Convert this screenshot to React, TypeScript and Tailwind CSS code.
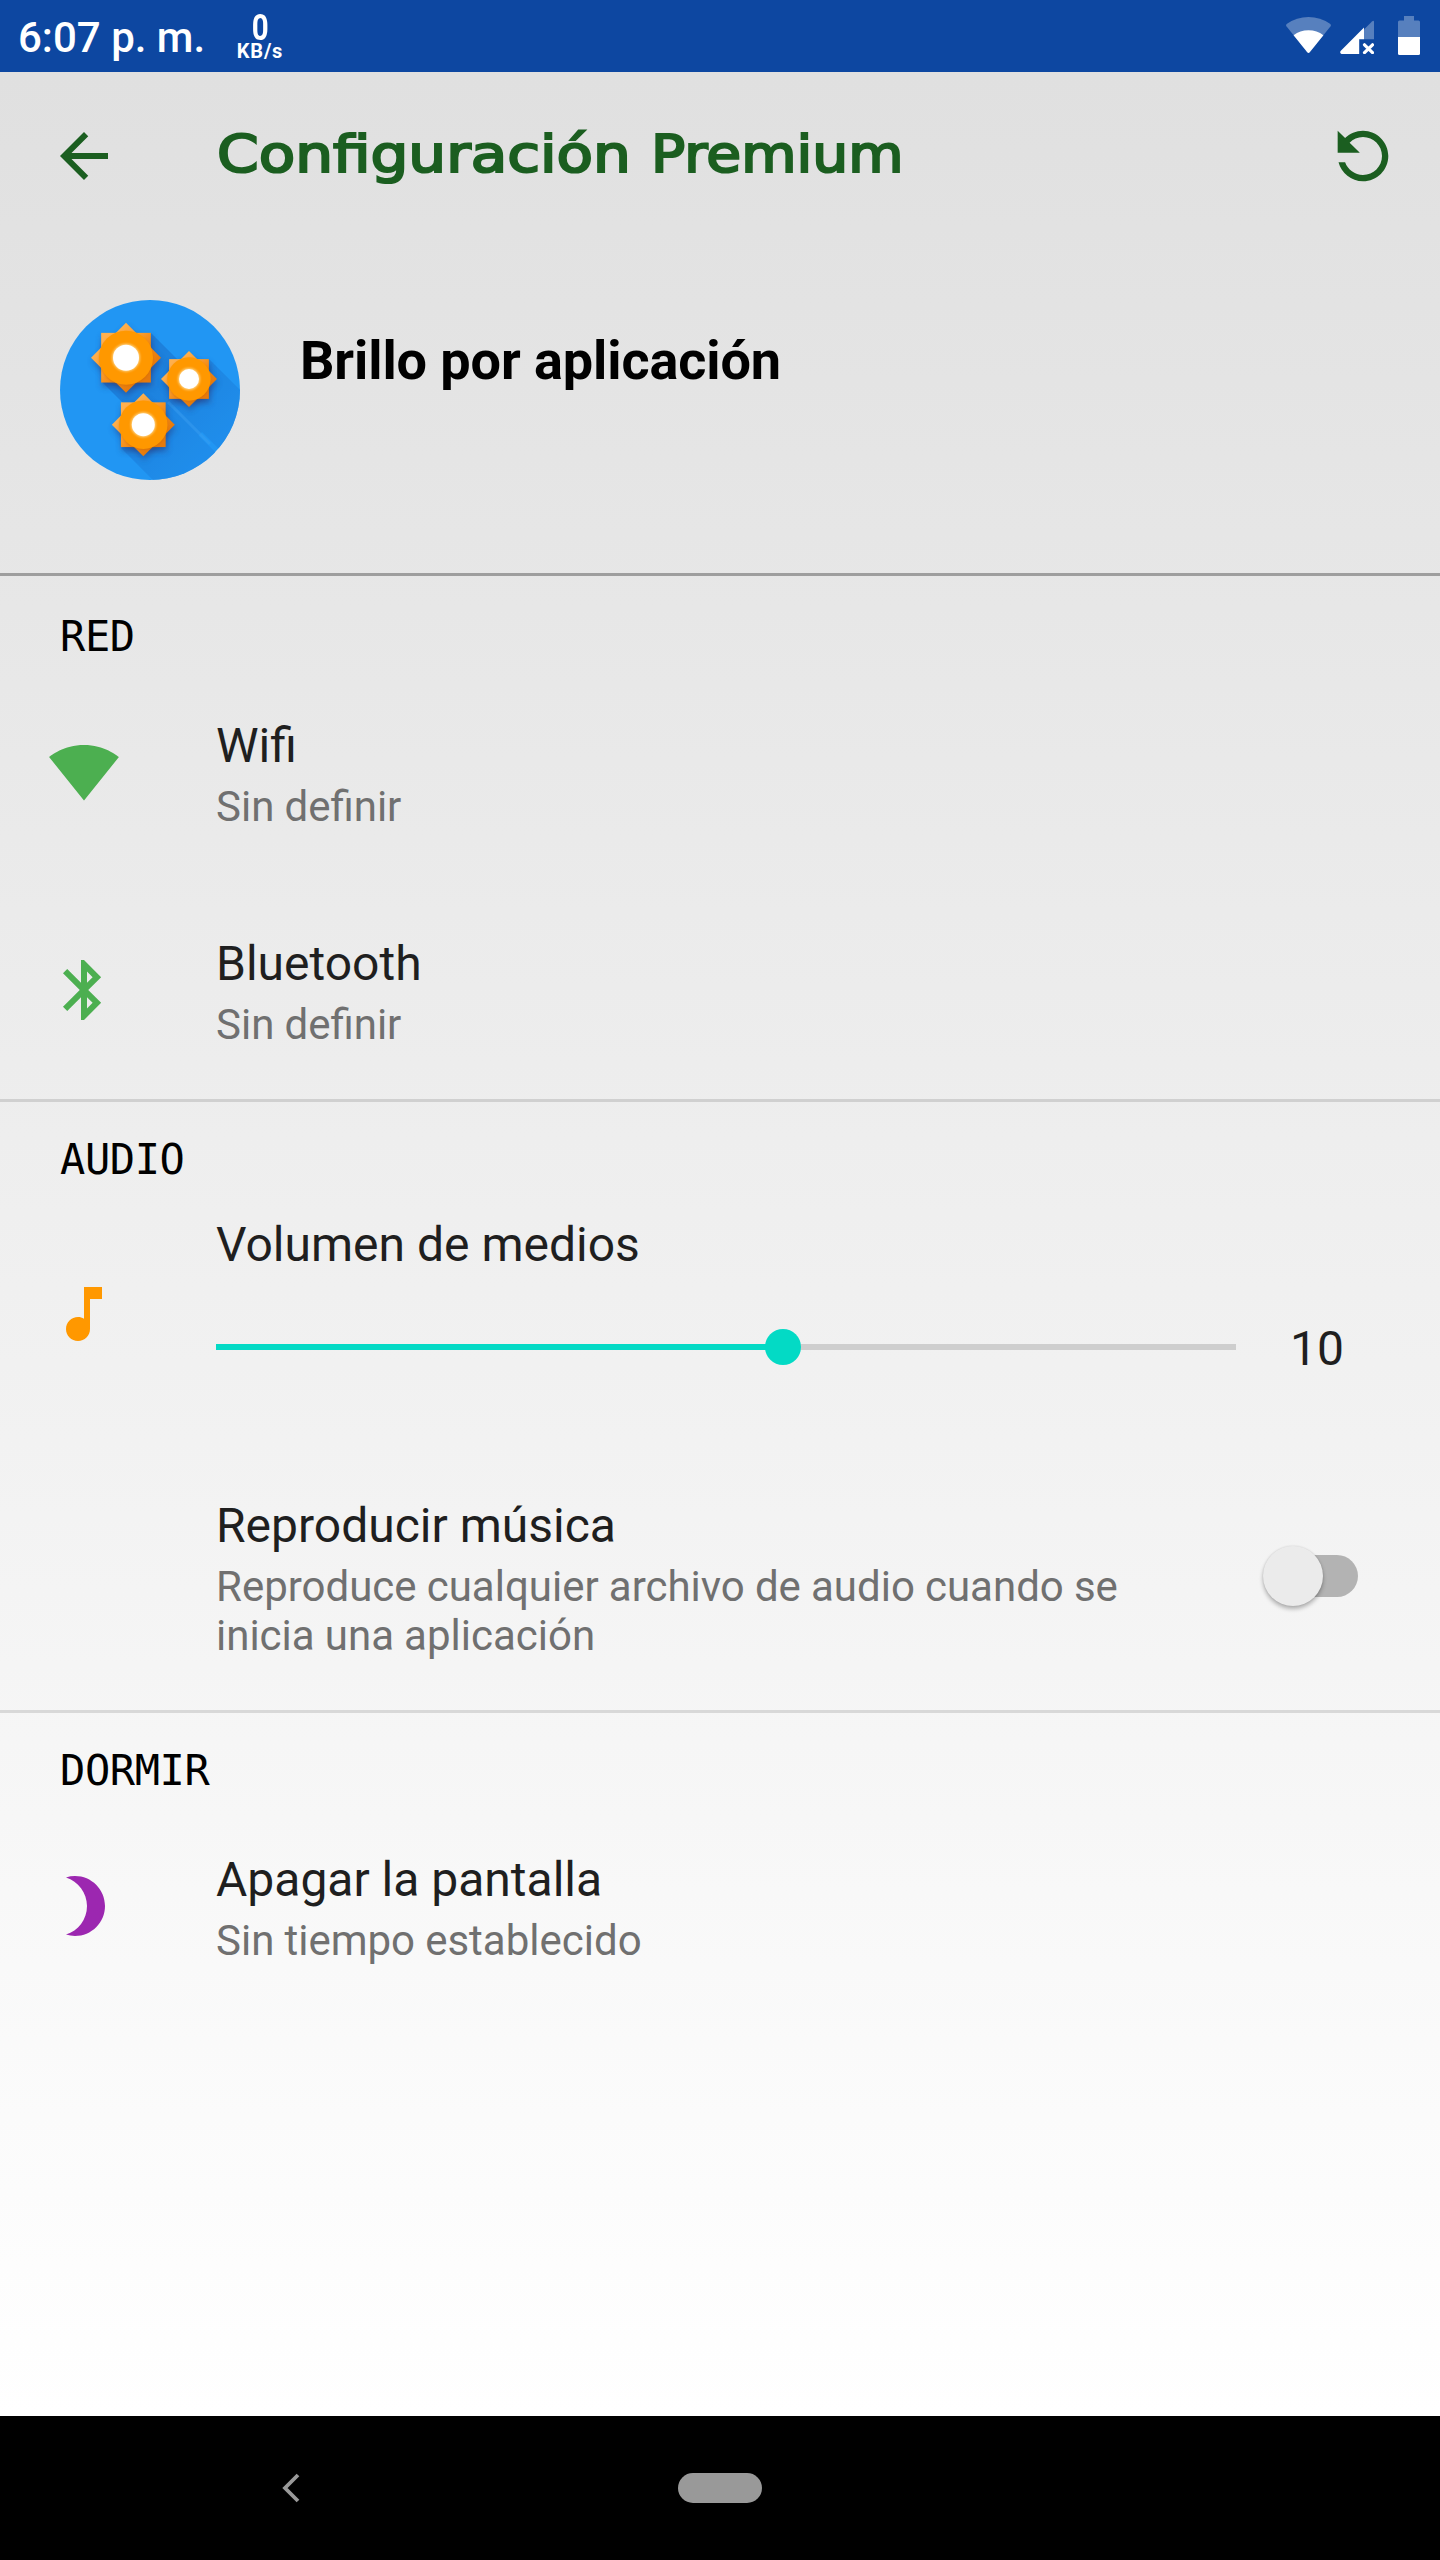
import type { ReactNode } from "react";

const ICONS = {
  back: "M20 11H7.83l5.59-5.59L12 4l-8 8 8 8 1.41-1.41L7.83 13H20v-2z",
  refresh:
    "M17.65 6.35C16.2 4.9 14.21 4 12 4c-4.42 0-7.99 3.58-7.99 8s3.57 8 7.99 8c3.73 0 6.84-2.55 7.73-6h-2.08c-.82 2.33-3.04 4-5.65 4-3.31 0-6-2.69-6-6s2.69-6 6-6c1.66 0 3.14.69 4.22 1.78L13 11h7V4l-2.35 2.35z",
  wifi: "M12.01 21.49L23.64 7c-.45-.34-4.93-4-11.64-4C5.28 3 .81 6.66.36 7l11.63 14.49.01.01.01-.01z",
  bluetooth:
    "M17.71 7.71L12 2h-1v7.59L6.41 5 5 6.41 10.59 12 5 17.59 6.41 19 11 14.41V22h1l5.71-5.71-4.3-4.29 4.3-4.29zM13 5.83l1.88 1.88L13 9.59V5.83zm1.88 10.46L13 18.17v-3.76l1.88 1.88z",
  note: "M12 3v10.55c-.59-.34-1.27-.55-2-.55-2.21 0-4 1.79-4 4s1.79 4 4 4 4-1.79 4-4V7h4V3h-6z",
  moon: "M9 2c-1.05 0-2.05.16-3 .46 4.06 1.27 7 5.06 7 9.54 0 4.48-2.94 8.27-7 9.54.95.3 1.95.46 3 .46 5.52 0 10-4.48 10-10S14.52 2 9 2z",
};

function Icon({ d, className }: { d: string; className: string }) {
  return (
    <svg viewBox="0 0 24 24" fill="currentColor" className={`shrink-0 ${className}`}>
      <path d={d} />
    </svg>
  );
}

function StatusBar() {
  return (
    <div className="flex h-[72px] items-start bg-[#0d47a1] text-white">
      <div className="ml-[18px] mt-[13px] w-[219px] whitespace-nowrap text-[42px] font-medium leading-[49px]">
        6:07 p. m.
      </div>
      <div className="mt-[14px] flex w-[46px] flex-col items-center font-bold">
        <span className="origin-center scale-x-[0.82] text-[36px] leading-[28px]">0</span>
        <span className="text-[20px] leading-[18px] tracking-[0.8px]">KB/s</span>
      </div>
      <div className="ml-auto mr-[20px] mt-[16px] flex items-start">
        <svg viewBox="0 0 45 37" className="mt-px h-[37px] w-[45px]" fill="#fff">
          <path d="M21.3 35.3.6 9.6Q-.6 8 1 6.8 10.600 0 22.500 0T44 6.800Q45.600 8 44.400 9.600L23.700 35.300Q22.500 36.600 21.300 35.300z" opacity=".31" />
          <path d="M21.300 35.300 7.600 18.300Q14 13.300 22.500 13.300T37.400 18.300L23.700 35.300Q22.500 36.600 21.300 35.300z" />
        </svg>
        <svg viewBox="0 0 34 34" className="ml-[9px] mt-[4px] h-[34px] w-[34px]" fill="#fff">
          <path d="M24 9.600 32 1.500Q34 0 34 2V19.200H24z" opacity=".31" />
          <path d="M.6 31 24 7.600V19.200H19.200V34H1.500Q-.6 33 .6 31z" />
          <path d="m24.500 24.800 8 7.800m0-7.800-8 7.800" stroke="#fff" strokeWidth="3.200" strokeLinecap="round" />
        </svg>
        <svg viewBox="0 0 22 39" className="ml-[24px] h-[39px] w-[22px]" fill="#fff">
          <path d="M6 0h10v4.500h4.500Q22 4.500 22 6v15H0V6q0-1.500 1.500-1.500H6z" opacity=".31" />
          <path d="M0 21h22v16.500q0 1.500-1.500 1.500h-19Q0 39 0 37.500z" />
        </svg>
      </div>
    </div>
  );
}

const SUNS = [
  { x: 66, y: 57.7, spike: 35, disc: 27, hole: 13 },
  { x: 129, y: 79, spike: 28, disc: 21.7, hole: 10 },
  { x: 83.3, y: 124.7, spike: 31.5, disc: 24.2, hole: 11.5 },
];

function AppLogo() {
  return (
    <svg viewBox="0 0 180 180" className="h-[180px] w-[180px] shrink-0">
      <defs>
        <clipPath id="disc">
          <circle cx="90" cy="90" r="90" />
        </clipPath>
        <linearGradient id="spikes" x1="0" y1="0" x2="1" y2="1">
          <stop offset="0.25" stopColor="#ffb04e" />
          <stop offset="0.5" stopColor="#f6921e" />
          <stop offset="0.75" stopColor="#e67a0c" />
        </linearGradient>
        <linearGradient id="cast" gradientUnits="userSpaceOnUse" x1="60" y1="60" x2="150" y2="150">
          <stop offset="0" stopColor="#1c75d0" />
          <stop offset="1" stopColor="#1f8ae8" />
        </linearGradient>
        <filter id="soft" x="-30%" y="-30%" width="160%" height="160%">
          <feGaussianBlur stdDeviation="3" />
        </filter>
        <filter id="glow" x="-30%" y="-30%" width="160%" height="160%">
          <feGaussianBlur stdDeviation="1" />
        </filter>
      </defs>
      <circle cx="90" cy="90" r="90" fill="#2196f3" />
      <g clipPath="url(#disc)">
        <g fill="url(#cast)" opacity=".75">
          <path d="M91 33 42 82l75 75 49-49z" />
          <path d="M149 59l-40 40 100 100 40-40z" />
          <path d="M106 103l-45 45 100 100 60-30z" />
        </g>
        <path d="m108 102 42 42" stroke="#3b9df0" strokeWidth="3" opacity=".5" />
      </g>
      {SUNS.map(({ x, y, spike, disc, hole }) => {
        const side = spike * 0.71;
        return (
          <g key={x} transform={`translate(${x} ${y})`}>
            <rect x={-side} y={-side} width={side * 2} height={side * 2} transform="translate(1 4)" fill="#273a80" opacity=".6" filter="url(#soft)" />
            <path d={`M0 ${-spike}L${spike} 0 0 ${spike} ${-spike} 0z`} transform="translate(1 4)" fill="#273a80" opacity=".45" filter="url(#soft)" />
            <rect x={-side} y={-side} width={side * 2} height={side * 2} fill="url(#spikes)" />
            <path d={`M0 ${-spike}L${spike} 0 0 ${spike} ${-spike} 0z`} fill="url(#spikes)" />
            <circle cy="1" r={disc} fill="#b85c00" opacity=".35" filter="url(#glow)" />
            <circle r={disc} fill="#ff9800" />
            <circle r={hole + 1} fill="#ffd180" filter="url(#glow)" />
            <circle r={hole} fill="#fff" />
          </g>
        );
      })}
    </svg>
  );
}

function Heading({ children }: { children: ReactNode }) {
  return (
    <h2 className="pl-[60px] font-['DejaVu_Sans_Mono',monospace] text-[42px] leading-[49px] tracking-[-0.4px] text-black">
      {children}
    </h2>
  );
}

function Labels({ title, summary }: { title: string; summary: string }) {
  return (
    <div className="w-[960px]">
      <div className="text-[48px] leading-[56px] text-[#1f1f1f]">{title}</div>
      <div className="mt-[8px] text-[42px] leading-[49px] text-[#707070] [word-spacing:-0.3px]">{summary}</div>
    </div>
  );
}

function Row({ icon, title, summary }: { icon: ReactNode; title: string; summary: string }) {
  return (
    <div className="flex h-[218px] items-center pl-[48px]">
      <div className="mb-[4px] w-[168px] shrink-0">{icon}</div>
      <Labels title={title} summary={summary} />
    </div>
  );
}

function Slider({ value, max }: { value: number; max: number }) {
  return (
    <div className="relative flex h-[36px] w-[1020px] items-center">
      <div className="h-[6px] w-full bg-[#cecece]">
        <div className="h-full bg-[#03dac5]" style={{ width: `${(value / max) * 100}%` }} />
      </div>
      <div
        className="absolute top-0 size-[36px] -translate-x-1/2 rounded-full bg-[#03dac5]"
        style={{ left: `${(value / max) * 100}%` }}
      />
    </div>
  );
}

export default function App() {
  return (
    <div className="flex h-[2560px] w-[1440px] flex-col overflow-hidden font-['Roboto',sans-serif]">
      <StatusBar />
      <main className="h-[2344px] bg-linear-to-b from-[#e0e0e0] to-white">
        <header className="flex h-[168px] items-center pl-[48px] pr-[39px] text-[#1b5e20]">
          <Icon d={ICONS.back} className="size-[72px]" />
          <h1 className="-mt-[4px] ml-[97px] flex whitespace-pre font-['DejaVu_Sans',sans-serif] text-[52px] leading-[60px] [-webkit-text-stroke:2.2px_#1b5e20]">
            <span className="w-[434px] origin-left scale-x-[1.147]">Configuración </span>
            <span className="origin-left scale-x-[1.091]">Premium</span>
          </h1>
          <Icon d={ICONS.refresh} className="ml-auto size-[76px] -scale-x-100" />
        </header>

        <div className="flex h-[333px] items-start pl-[60px] pt-[60px]">
          <AppLogo />
          <div className="ml-[60px] mt-[29px] text-[54px] font-bold leading-[63px] tracking-[-0.1px] text-black">
            Brillo por aplicación
          </div>
        </div>

        <section className="h-[526px] border-t-[3px] border-[#9e9e9e] pt-[36px]">
          <Heading>RED</Heading>
          <div className="mt-[4px]">
            <Row
              icon={<Icon d={ICONS.wifi} className="size-[72px] text-[#4caf50]" />}
              title="Wifi"
              summary="Sin definir"
            />
            <Row
              icon={<Icon d={ICONS.bluetooth} className="size-[72px] text-[#4caf50]" />}
              title="Bluetooth"
              summary="Sin definir"
            />
          </div>
        </section>

        <section className="h-[611px] border-t-[3px] border-[#d0d0d0] pt-[33px]">
          <Heading>AUDIO</Heading>
          <div className="mt-[33px] flex h-[281px] items-start pl-[48px]">
            <Icon d={ICONS.note} className="mt-[61px] size-[72px] text-[#ff9800]" />
            <div className="ml-[96px]">
              <div className="text-[48px] leading-[56px] text-[#1f1f1f]">Volumen de medios</div>
              <div className="mt-[48px] flex h-[56px] items-start">
                <div className="mt-[8px]">
                  <Slider value={10} max={18} />
                </div>
                <div className="w-[162px] text-center text-[48px] leading-[56px] text-[#1f1f1f]">10</div>
              </div>
            </div>
          </div>
          <div className="flex items-center pl-[216px]">
            <Labels
              title="Reproducir música"
              summary="Reproduce cualquier archivo de audio cuando se inicia una aplicación"
            />
            <div className="relative mb-[6px] ml-[99px] h-[42px] w-[83px] rounded-full bg-[#b3b3b3]">
              <div className="absolute -left-[12px] -top-[9px] size-[60px] rounded-full bg-[#ebebeb] shadow-[0_3px_4px_rgba(0,0,0,0.28),0_0_2px_rgba(0,0,0,0.12)]" />
            </div>
          </div>
        </section>

        <section className="border-t-[3px] border-[#d8d8d8] pt-[33px]">
          <Heading>DORMIR</Heading>
          <div className="mt-[4px]">
            <Row
              icon={<Icon d={ICONS.moon} className="size-[72px] text-[#9c27b0]" />}
              title="Apagar la pantalla"
              summary="Sin tiempo establecido"
            />
          </div>
        </section>
      </main>

      <nav className="flex h-[144px] items-center bg-black">
        <svg viewBox="0 0 18 30" className="ml-[282px] h-[30px] w-[18px]" fill="none">
          <path d="M16 2 3 15l13 13" stroke="#999" strokeWidth="3.800" />
        </svg>
        <div className="ml-[378px] h-[30px] w-[84px] rounded-full bg-[#999]" />
      </nav>
    </div>
  );
}
